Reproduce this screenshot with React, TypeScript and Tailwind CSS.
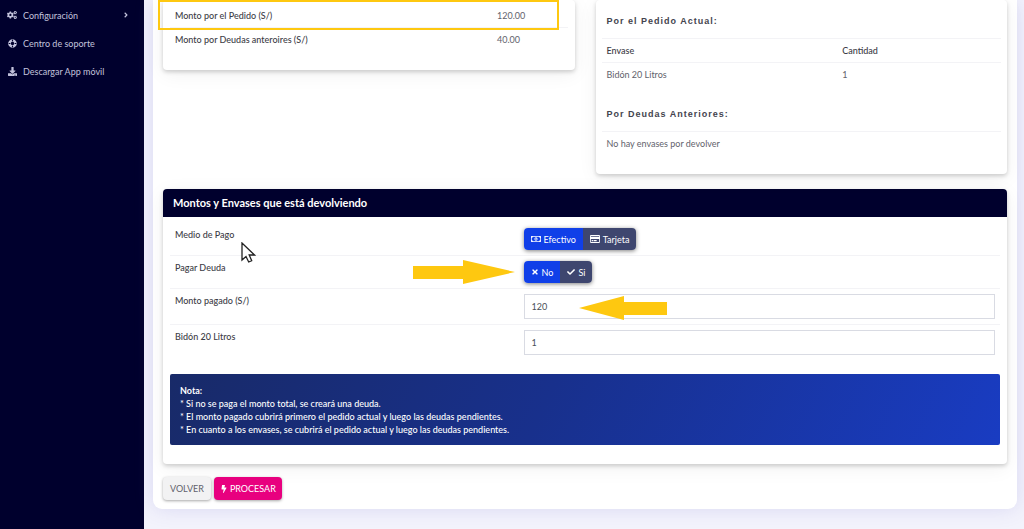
import { useState } from 'react'
import type { ReactNode } from 'react'
import clsx from 'clsx'
import {
    FaAngleRight,
    FaBolt,
    FaCheck,
    FaCogs,
    FaDownload,
    FaLifeRing,
    FaRegCreditCard,
    FaRegMoneyBillAlt,
    FaTimes,
} from 'react-icons/fa'

const menu = [
    { label: 'Configuración', icon: <FaCogs size={10} />, submenu: true },
    {
        label: 'Centro de soporte',
        icon: <FaLifeRing size={9} className="rotate-45" />,
    },
    { label: 'Descargar App móvil', icon: <FaDownload size={9} /> },
]

const amounts = [
    { label: 'Monto por el Pedido (S/)', value: '120.00' },
    { label: 'Monto por Deudas anteroires (S/)', value: '40.00' },
]

const notes = [
    '* Si no se paga el monto total, se creará una deuda.',
    '* El monto pagado cubrirá primero el pedido actual y luego las deudas pendientes.',
    '* En cuanto a los envases, se cubrirá el pedido actual y luego las deudas pendientes.',
]

function Sidebar() {
    return (
        <aside className="w-36 shrink-0 bg-[#00002d]">
            <nav className="pt-px">
                {menu.map((item) => (
                    <a
                        key={item.label}
                        href="#"
                        className="flex h-7 items-center gap-1.5 pr-3.5 pl-[7px] text-[#c3c3dc]"
                    >
                        <span className="flex w-[10px] justify-center">
                            {item.icon}
                        </span>
                        <span className="flex-1 whitespace-nowrap">
                            {item.label}
                        </span>
                        {item.submenu && <FaAngleRight size={8} />}
                    </a>
                ))}
            </nav>
        </aside>
    )
}

function Card({
    className,
    children,
}: {
    className?: string
    children: ReactNode
}) {
    return (
        <section
            className={clsx(
                'rounded-[4px] bg-white shadow-[0_2px_4px_rgba(0,0,0,0.18),0_4px_20px_rgba(0,0,0,0.06)]',
                className
            )}
        >
            {children}
        </section>
    )
}

function AmountsCard() {
    return (
        <Card className="relative px-[7px] pt-1 pb-[19px]">
            <table className="w-full table-fixed">
                <tbody>
                    {amounts.map((row) => (
                        <tr
                            key={row.label}
                            className="border-b border-[#f3f3f6] last:border-0"
                        >
                            <th
                                scope="row"
                                className="w-[81%] px-[5px] py-[5px] text-left font-medium text-[#3c3c46]"
                            >
                                {row.label}
                            </th>
                            <td className="px-[5px] py-[5px]">{row.value}</td>
                        </tr>
                    ))}
                </tbody>
            </table>
            <div className="absolute top-0 right-4 -left-[5px] h-[30px] border-[2px] border-[#fec810]" />
        </Card>
    )
}

function Subtitle({ children }: { children: ReactNode }) {
    return (
        <h3 className="px-[5px] pb-[10px] font-['Liberation_Sans',sans-serif] leading-[14px] font-bold tracking-[1px] text-[#44444e]">
            {children}
        </h3>
    )
}

function ContainersCard() {
    return (
        <Card className="px-1.5 pt-3.5 pb-[19px]">
            <Subtitle>Por el Pedido Actual:</Subtitle>
            <table className="mb-[21px] w-full table-fixed border-t border-[#f3f3f6]">
                <thead>
                    <tr className="border-b border-[#f3f3f6] text-left text-[#3c3c46]">
                        <th className="w-[59%] px-[5px] py-[5px] font-medium">
                            Envase
                        </th>
                        <th className="px-[5px] py-[5px] font-medium">
                            Cantidad
                        </th>
                    </tr>
                </thead>
                <tbody>
                    <tr>
                        <td className="px-[5px] py-[5px]">Bidón 20 Litros</td>
                        <td className="px-[5px] py-[5px]">1</td>
                    </tr>
                </tbody>
            </table>
            <Subtitle>Por Deudas Anteriores:</Subtitle>
            <p className="border-t border-[#f3f3f6] px-[5px] py-[5px]">
                No hay envases por devolver
            </p>
        </Card>
    )
}

type Option = { value: string; icon: ReactNode }

function ToggleGroup({
    label,
    options,
    initial,
}: {
    label: string
    options: Option[]
    initial: string
}) {
    const [selected, setSelected] = useState(initial)

    return (
        <div
            role="group"
            aria-label={label}
            className="inline-flex h-[22px] overflow-hidden rounded-[4px] align-top shadow-[0_1px_4px_rgba(0,0,0,0.5)]"
        >
            {options.map((option) => (
                <button
                    key={option.value}
                    type="button"
                    aria-pressed={selected === option.value}
                    onClick={() => setSelected(option.value)}
                    className={clsx(
                        'flex items-center gap-[3px] px-[7px] text-white',
                        selected === option.value
                            ? 'bg-[#103fe8]'
                            : 'bg-[#3e466f]'
                    )}
                >
                    {option.icon}
                    {option.value}
                </button>
            ))}
        </div>
    )
}

function Row({ label, children }: { label: ReactNode; children: ReactNode }) {
    return (
        <div className="flex border-b border-[#f3f3f6] py-[5px] last:border-0">
            <div className="relative w-[42%] px-[5px] font-medium text-[#3c3c46]">
                {label}
            </div>
            <div className="relative flex-1 px-[5px]">{children}</div>
        </div>
    )
}

function Field({ id, value }: { id: string; value: string }) {
    return (
        <input
            id={id}
            type="text"
            defaultValue={value}
            className="block h-[25px] w-full border border-[#d9dbe3] bg-white px-[7px] text-[#495057] outline-none"
        />
    )
}

function RightArrow({ className }: { className: string }) {
    return (
        <svg viewBox="0 0 102 24" className={className} fill="#fec810">
            <path d="M0 6H50V0L102 12L50 24V19H0Z" />
        </svg>
    )
}

function LeftArrow({ className }: { className: string }) {
    return (
        <svg viewBox="0 0 88 24" className={className} fill="#fec810">
            <path d="M88 6H45V0L0 12L45 24V19H88Z" />
        </svg>
    )
}

function Cursor() {
    return (
        <svg
            viewBox="0 0 15 21"
            className="absolute top-3.5 left-[71px] z-10 h-[21px] w-[15px]"
            fill="#fff"
            stroke="#222"
            strokeWidth="1.3"
        >
            <path d="M1 1V18L5 14.5L7.7 20L10.7 18.7L8.2 13H13.5Z" />
        </svg>
    )
}

function ReturnCard() {
    return (
        <Card className="mt-[15px] pb-[19px]">
            <h2 className="rounded-t-[4px] bg-[#00002d] px-2.5 text-[11px] leading-7 font-bold text-white">
                Montos y Envases que está devolviendo
            </h2>
            <div className="px-[7px] pt-1.5">
                <div>
                    <Row
                        label={
                            <>
                                Medio de Pago
                                <Cursor />
                            </>
                        }
                    >
                        <ToggleGroup
                            label="Medio de Pago"
                            initial="Efectivo"
                            options={[
                                {
                                    value: 'Efectivo',
                                    icon: <FaRegMoneyBillAlt size={10} />,
                                },
                                {
                                    value: 'Tarjeta',
                                    icon: <FaRegCreditCard size={10} />,
                                },
                            ]}
                        />
                    </Row>
                    <Row
                        label={
                            <>
                                Pagar Deuda
                                <RightArrow className="absolute -top-px right-1 h-6 w-[102px]" />
                            </>
                        }
                    >
                        <ToggleGroup
                            label="Pagar Deuda"
                            initial="No"
                            options={[
                                { value: 'No', icon: <FaTimes size={8} /> },
                                { value: 'Si', icon: <FaCheck size={8} /> },
                            ]}
                        />
                    </Row>
                    <Row
                        label={<label htmlFor="monto">Monto pagado (S/)</label>}
                    >
                        <Field id="monto" value="120" />
                        <LeftArrow className="absolute top-0.5 left-[60px] h-6 w-[88px]" />
                    </Row>
                    <Row label={<label htmlFor="bidon">Bidón 20 Litros</label>}>
                        <Field id="bidon" value="1" />
                    </Row>
                </div>
                <div className="mt-3.5 rounded-[2px] bg-linear-[115deg,#182a68_0%,#18308c_45%,#193cc2_100%] px-2.5 pt-2.5 pb-[9px] leading-[13px] font-medium text-white">
                    <p className="font-bold">Nota:</p>
                    {notes.map((note) => (
                        <p key={note}>{note}</p>
                    ))}
                </div>
            </div>
        </Card>
    )
}

export default function App() {
    return (
        <div className="flex min-h-screen bg-[#f3f3fc] font-[Lato,sans-serif] text-[9px] leading-[13px] text-[#62626c]">
            <Sidebar />
            <main className="min-w-0 flex-1 pr-[7px] pb-5 pl-[9px]">
                <div className="rounded-b-[9px] bg-white px-2.5 pb-[9px] shadow-[0_0_20px_rgba(90,80,190,0.16)]">
                    <div className="grid grid-cols-2 items-start gap-[21px]">
                        <AmountsCard />
                        <ContainersCard />
                    </div>
                    <ReturnCard />
                    <div className="mt-[13px] flex gap-[3px]">
                        <button
                            type="button"
                            className="h-[23px] rounded-[4px] bg-[#f2f2f3] px-[7px] shadow-[0_1px_3px_rgba(0,0,0,0.35)]"
                        >
                            VOLVER
                        </button>
                        <button
                            type="button"
                            className="flex h-[23px] items-center gap-0.5 rounded-[4px] bg-[#e8007f] px-1.5 text-white shadow-[0_1px_3px_rgba(0,0,0,0.35)]"
                        >
                            <FaBolt size={8} />
                            PROCESAR
                        </button>
                    </div>
                </div>
            </main>
        </div>
    )
}
